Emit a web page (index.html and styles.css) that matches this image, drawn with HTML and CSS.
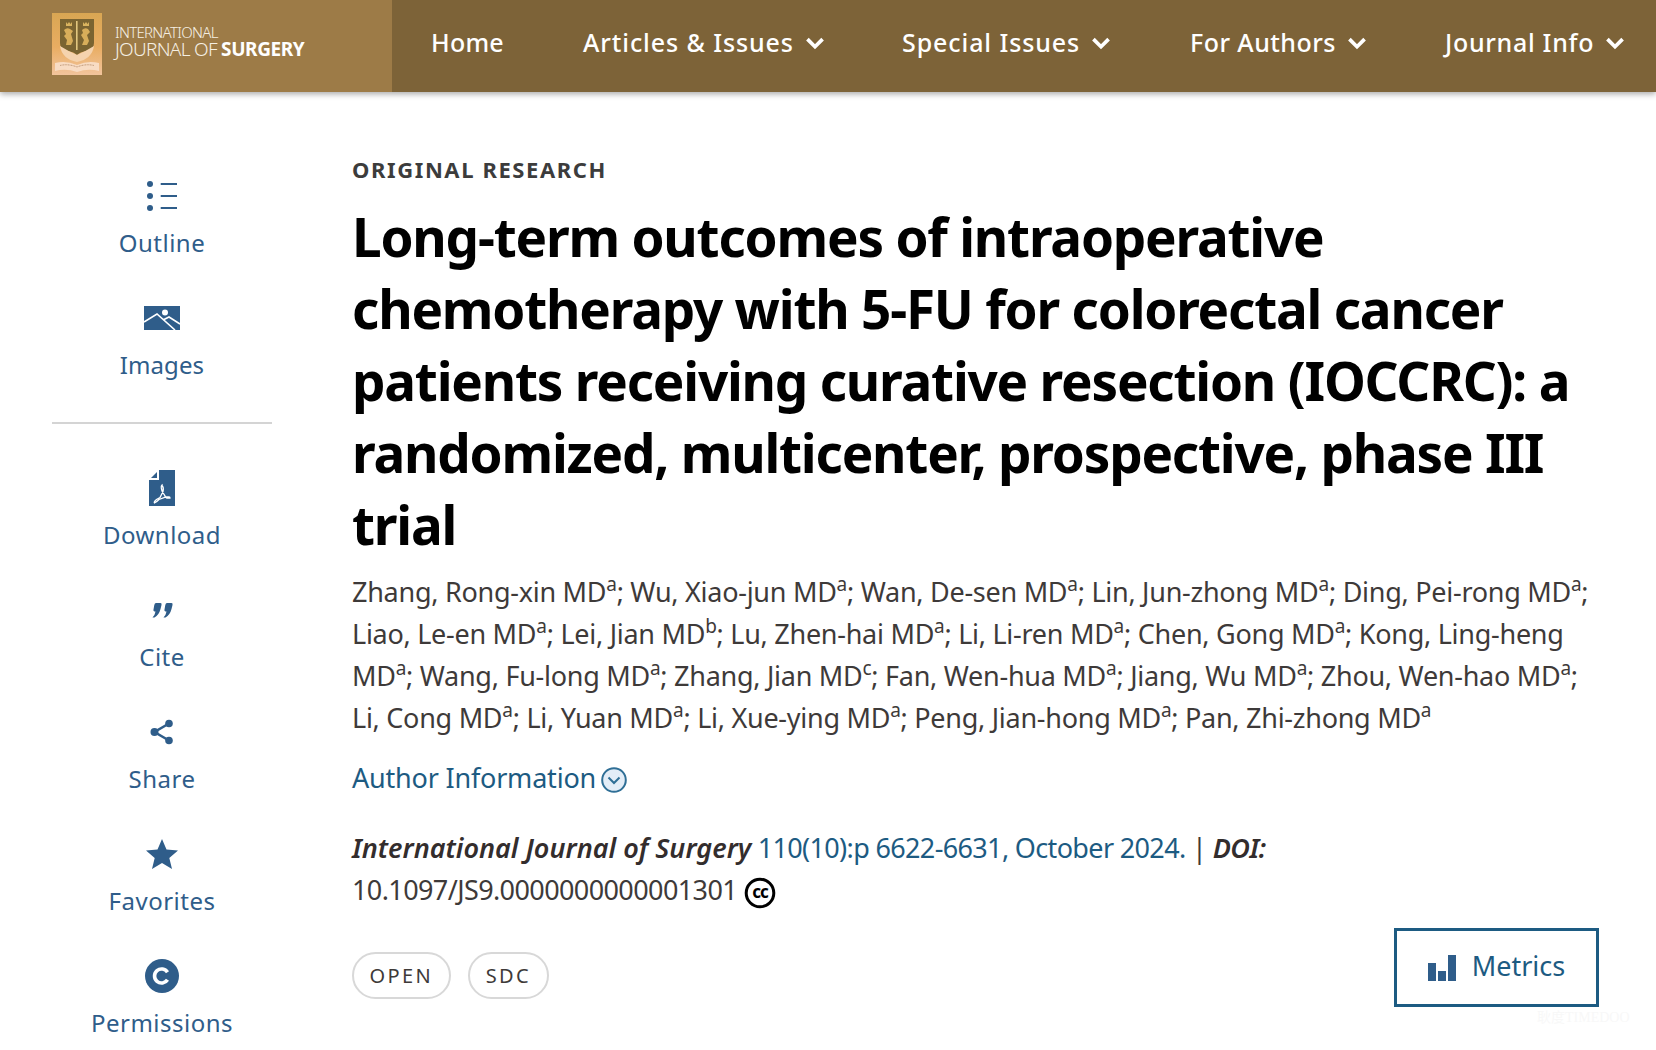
FILE: index.html
```html
<!DOCTYPE html>
<html lang="en">
<head>
<meta charset="utf-8">
<title>Long-term outcomes of intraoperative chemotherapy</title>
<link rel="stylesheet" href="styles.css">
</head>
<body>
<header class="topbar">
  <a class="brand">
    <svg class="crest" viewBox="0 0 50 62" aria-hidden="true">
      <defs>
        <linearGradient id="crestBg" x1="0" y1="0" x2="0" y2="1">
          <stop offset="0" stop-color="#d9a653"/>
          <stop offset=".55" stop-color="#e9ad62"/>
          <stop offset="1" stop-color="#f2c49c"/>
        </linearGradient>
      </defs>
      <rect width="50" height="62" fill="url(#crestBg)"/>
      <path d="M8 6H42V30Q42 37 34 38Q28 39 25 42Q22 39 16 38Q8 37 8 30Z" fill="#7a6431"/>
      <path d="M8 33Q16 38 25 42Q34 38 42 33Q40 46 25 49Q10 46 8 33Z" fill="#f5d3ae"/>
      <rect x="24" y="8" width="1.6" height="29" fill="#e2c77f"/>
      <path d="M14 9l1.500 2 1.500-2 1.500 2 1.500-2v4h-6zM31 9l1.500 2 1.500-2 1.500 2 1.500-2v4h-6z" fill="#d9b45f"/>
      <path d="M12 17q3-3 6-1l3 2-2 3 2 7-2 4h-5l1-5-3-4 2-2zM30 17q3-3 6-1l2 3-3 3 2 6-2 4h-5l2-5-3-5 2-2z" fill="#d8ae5a"/>
      <path d="M3 50Q14 47 25 52Q36 47 47 50V58Q36 55 25 59Q14 55 3 58Z" fill="#f8dcc4"/>
      <path d="M8 52.500Q16 50.500 25 54Q34 50.500 42 52.500" fill="none" stroke="#a97f5c" stroke-width=".8" stroke-dasharray="1 .6"/>
    </svg>
    <span class="brand-text">
      <span class="brand-small">INTERNATIONAL</span>
      <span class="brand-large">JOURNAL OF <b>SURGERY</b></span>
    </span>
  </a>
  <nav class="nav">
    <a class="nav-home">Home</a>
    <a class="nav-articles">Articles &amp; Issues <svg class="chev" viewBox="0 0 18 12"><path d="M2 2l7 7 7-7"/></svg></a>
    <a class="nav-special">Special Issues <svg class="chev" viewBox="0 0 18 12"><path d="M2 2l7 7 7-7"/></svg></a>
    <a class="nav-authors">For Authors <svg class="chev" viewBox="0 0 18 12"><path d="M2 2l7 7 7-7"/></svg></a>
    <a class="nav-info">Journal Info <svg class="chev" viewBox="0 0 18 12"><path d="M2 2l7 7 7-7"/></svg></a>
  </nav>
</header>

<div class="page">
  <aside class="side">
    <a class="tool">
      <span class="tool-icon">
        <svg width="30" height="32" viewBox="0 0 30 32"><circle cx="3" cy="4" r="3"/><circle cx="3" cy="16" r="3"/><circle cx="3" cy="28" r="3"/><path d="M13.700 3h16.300v2H13.700zM13.700 15h16.300v2H13.700zM13.700 27h16.300v2H13.700z"/></svg>
      </span>
      <span class="tool-label">Outline</span>
    </a>
    <a class="tool">
      <span class="tool-icon">
        <svg width="36" height="24" viewBox="0 0 36 24"><path d="M0 0h36v24H0z"/><circle cx="21" cy="6.500" r="3" fill="#fff"/><path d="M0 16L13 8l18 16M19 14l6-3 11 7" fill="none" stroke="#fff" stroke-width="1.600"/></svg>
      </span>
      <span class="tool-label tool-label-tight">Images</span>
    </a>
    <hr class="side-rule">
    <a class="tool">
      <span class="tool-icon">
        <svg width="26" height="36" viewBox="0 0 26 36"><path d="M10 0h16v36H0V10h10z"/><path d="M2 8l6-6v6z"/><path d="M13 15q-1.500 1 0 6l4 6.500q1 1 4 .5q0-1.500-4-1l-7 2.500q-3 3-4.500 3.500q-1-1 2-3.500l3.500-2 3-6q1-4-1-6z" fill="none" stroke="#fff" stroke-width="1.300"/></svg>
      </span>
      <span class="tool-label">Download</span>
    </a>
    <a class="tool">
      <span class="tool-icon">
        <svg width="21" height="15" viewBox="0 0 21 15"><path d="M4 0h4.500q1.500 0 1 2l-1 4q-1.500 6-6 8.500H.5q2.500-2.500 3-6q-2.500 0-2-2l.8-4.500q.4-2 1.700-2z"/><path d="M15 0h4.500q1.500 0 1 2l-1 4q-1.500 6-6 8.500h-2q2.500-2.500 3-6q-2.500 0-2-2l.8-4.500q.4-2 1.700-2z"/></svg>
      </span>
      <span class="tool-label">Cite</span>
    </a>
    <a class="tool">
      <span class="tool-icon">
        <svg width="24" height="26" viewBox="0 0 24 26"><circle cx="19" cy="4.500" r="3.800"/><circle cx="4.500" cy="13" r="4"/><circle cx="19" cy="21.500" r="3.800"/><path d="M19 4.500L4.500 13 19 21.500" fill="none" stroke="#2f5d8a" stroke-width="2.600"/></svg>
      </span>
      <span class="tool-label">Share</span>
    </a>
    <a class="tool">
      <span class="tool-icon">
        <svg width="32" height="30" viewBox="0 0 32 30"><path d="M16 0l4.500 10.500L32 11.500l-8.700 7.400L26 30l-10-6-10 6 2.700-11.100L0 11.500l11.500-1z"/></svg>
      </span>
      <span class="tool-label">Favorites</span>
    </a>
    <a class="tool">
      <span class="tool-icon">
        <svg width="34" height="34" viewBox="0 0 34 34"><circle cx="17" cy="17" r="17"/><path d="M22.500 13.300a7 7 0 1 0 0 7.400" fill="none" stroke="#fff" stroke-width="3.600"/></svg>
      </span>
      <span class="tool-label">Permissions</span>
    </a>
  </aside>

  <main class="article">
    <p class="kicker">ORIGINAL RESEARCH</p>
    <h1 class="title">Long-term outcomes of intraoperative<br>chemotherapy with 5-FU for colorectal cancer<br>patients receiving curative resection (IOCCRC): a<br>randomized, multicenter, prospective, phase III<br>trial</h1>
    <p class="authors">Zhang, Rong-xin MD<sup>a</sup>; Wu, Xiao-jun MD<sup>a</sup>; Wan, De-sen MD<sup>a</sup>; Lin, Jun-zhong MD<sup>a</sup>; Ding, Pei-rong MD<sup>a</sup>;<br>Liao, Le-en MD<sup>a</sup>; Lei, Jian MD<sup>b</sup>; Lu, Zhen-hai MD<sup>a</sup>; Li, Li-ren MD<sup>a</sup>; Chen, Gong MD<sup>a</sup>; Kong, Ling-heng<br>MD<sup>a</sup>; Wang, Fu-long MD<sup>a</sup>; Zhang, Jian MD<sup>c</sup>; Fan, Wen-hua MD<sup>a</sup>; Jiang, Wu MD<sup>a</sup>; Zhou, Wen-hao MD<sup>a</sup>;<br>Li, Cong MD<sup>a</sup>; Li, Yuan MD<sup>a</sup>; Li, Xue-ying MD<sup>a</sup>; Peng, Jian-hong MD<sup>a</sup>; Pan, Zhi-zhong MD<sup>a</sup></p>
    <p class="author-info"><a class="link">Author Information</a>
      <svg class="expand" width="26" height="26" viewBox="0 0 26 26"><circle cx="13" cy="13" r="11.800" fill="#e3edf7" stroke="#2f6f96" stroke-width="2"/><path d="M7.500 10.500L13 16l5.500-5.500" fill="none" stroke="#2f6f96" stroke-width="2"/></svg>
    </p>
    <p class="citation"><em>International Journal of Surgery</em> <a class="link">110(10):p 6622-6631, October 2024.</a> | <em class="doi">DOI:</em><br>10.1097/JS9.0000000000001301
      <svg class="cc" width="32" height="32" viewBox="0 0 32 32"><circle cx="16" cy="16" r="13.800" fill="#fff" stroke="#000" stroke-width="3"/><text class="cc-text" x="16" y="20.500" text-anchor="middle">cc</text></svg>
    </p>
    <div class="foot-row">
      <div class="tags"><span class="tag">OPEN</span><span class="tag">SDC</span></div>
      <a class="metrics">
        <svg width="28" height="26" viewBox="0 0 28 26"><path d="M0 8h8v18H0zM10 16h8v10h-8zM20 0h8v26h-8z"/></svg>
        <span>Metrics</span>
      </a>
    </div>
  </main>
</div>
<span class="watermark">耿度TIMEDOO</span>
</body>
</html>
```
FILE: styles.css
```css
* { box-sizing: border-box; }
html, body { margin: 0; padding: 0; height: 1050px; overflow: hidden; }
body { font-family: "Noto Sans", "Open Sans", sans-serif; background: #fff; color: #3e3a39; position: relative; }
p { margin: 0; }
a { color: inherit; text-decoration: none; }

.topbar { display: flex; height: 92px; box-shadow: 0 2px 6px rgba(0,0,0,.35); position: relative; }
.brand { width: 392px; flex: none; background: #9d7b47; display: flex; align-items: center; padding: 0 0 4px 52px; gap: 13px; color: #fff; }
.crest { width: 50px; height: 62px; display: block; flex: none; }
.brand-text { display: flex; flex-direction: column; font-weight: 300; padding-bottom: 5px; color: #f5efe3; }
.brand-small { font-size: 15px; letter-spacing: -.7px; line-height: 15px; }
.brand-large { font-size: 19px; letter-spacing: -.7px; line-height: 19px; }
.brand-large b { font-weight: 700; letter-spacing: -.4px; color: #fff; }

.nav { flex: 1; background: #7d6338; display: flex; align-items: center; font-size: 25px; font-weight: 500; letter-spacing: .9px; color: #fff; padding-left: 39px; padding-bottom: 9px; white-space: nowrap; overflow: hidden; }
.nav a { display: flex; align-items: center; gap: 11px; }
.nav .nav-home { width: 152px; letter-spacing: .2px; }
.nav .nav-articles { width: 319px; }
.nav .nav-special { width: 288px; }
.nav .nav-authors { width: 255px; letter-spacing: .45px; }
.nav .nav-info { letter-spacing: .7px; }
.chev { width: 20px; height: 13px; margin-top: 3px; }
.chev path { fill: none; stroke: #fff; stroke-width: 3.4; }

.page { display: flex; }
.side { width: 352px; flex: none; padding: 80px 0 0 52px; }
.tool { display: flex; flex-direction: column; align-items: center; width: 220px; height: 122px; color: #2f5d8a; font-size: 24px; }
.tool-icon { height: 48px; display: flex; align-items: center; justify-content: center; }
.tool-icon svg { fill: #2f5d8a; display: block; }
.tool-label { line-height: 30px; margin-top: 8px; letter-spacing: .5px; }
.tool-label-tight { letter-spacing: .1px; }
.side-rule { width: 220px; height: 2px; border: 0; background: #d4d4d4; margin: 6px 0 40px; }

.article { width: 1247px; padding-top: 62px; }
.kicker { font-size: 22px; font-weight: 700; letter-spacing: 1.6px; line-height: 30px; color: #3c3c3c; }
.title { margin: 17px 0 0; font-size: 53px; line-height: 72px; font-weight: 700; color: #000; letter-spacing: -1.2px; white-space: nowrap; }
.authors { margin-top: 10px; font-size: 27px; line-height: 42px; white-space: nowrap; letter-spacing: -.27px; }
.authors sup { font-size: 19px; line-height: 0; vertical-align: 11px; }
.author-info { margin-top: 19px; font-size: 27px; line-height: 40px; display: flex; align-items: center; gap: 5px; letter-spacing: -.2px; }
.link { color: #1d5b82; }
.expand { margin-top: 3px; }
.citation { margin-top: 29px; font-size: 27px; line-height: 42px; letter-spacing: -.6px; white-space: nowrap; }
.citation em { font-weight: 600; color: #332d2d; letter-spacing: 0; }
.citation .doi { letter-spacing: -.5px; }
.citation .link { letter-spacing: -.65px; }
.cc { vertical-align: middle; }
.cc-text { font-size: 17px; font-weight: 700; fill: #000; letter-spacing: -1px; }
.foot-row { display: flex; justify-content: space-between; align-items: flex-end; margin-top: 17px; }
.tags { display: flex; gap: 17px; margin-bottom: 8px; }
.tag { height: 47px; border: 2px solid #d8d8d8; border-radius: 24px; padding: 0 16px 0 15.500px; display: flex; align-items: center; font-size: 20px; letter-spacing: 2.4px; color: #3e3a39; }
.metrics { width: 205px; height: 79px; border: 3px solid #1d5b82; display: flex; align-items: center; justify-content: center; gap: 16px; font-size: 27px; color: #1d5b82; }
.metrics span { margin-top: -4px; }
.metrics svg { fill: #2f5d8a; display: block; }
.watermark { position: absolute; left: 1537px; top: 1006px; font: 14px "Liberation Serif", "Noto Sans CJK SC", serif; color: #f8f8f8; }
```
